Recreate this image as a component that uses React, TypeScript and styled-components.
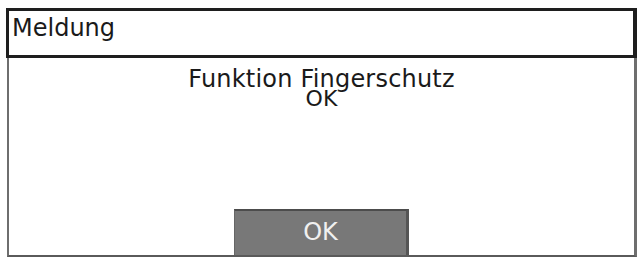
import React from "react";
import styled, { createGlobalStyle } from "styled-components";

const Global = createGlobalStyle`
  html, body { margin: 0; padding: 0; background: #ffffff; }
  body { font-family: "DejaVu Sans", "Liberation Sans", sans-serif; }
`;

const Screen = styled.div`
  width: 637px;
  height: 257px;
  box-sizing: border-box;
  padding: 8px 0 0 6px;
  display: flex;
  flex-direction: column;
  background: #ffffff;
  overflow: hidden;
`;

const TitleBar = styled.div`
  height: 50px;
  box-sizing: border-box;
  border: 3px solid #1e1e1e;
  border-right-width: 4px;
  padding: 3px 0 0 3px;
  display: flex;
  align-items: flex-start;
`;

const Title = styled.span`
  font-size: 24px;
  line-height: 28px;
  color: #1a1a1a;
`;

const Body = styled.div`
  flex: 1;
  margin-left: 1px;
  box-sizing: border-box;
  border-left: 2px solid #6e6e6e;
  border-right: 3px solid #6e6e6e;
  border-bottom: 2px solid #5a5a5a;
  padding-top: 11px;
  display: flex;
  flex-direction: column;
  align-items: center;
`;

const Message = styled.div`
  display: flex;
  flex-direction: column;
  align-items: center;
  color: #1a1a1a;
`;

const Line = styled.div<{ $size: number }>`
  font-size: ${(p) => p.$size}px;
  line-height: 20px;
  height: 20px;
  letter-spacing: 0.2px;
  white-space: nowrap;
  overflow: visible;
`;

const Spacer = styled.div`
  flex: 1;
`;

const Button = styled.button`
  width: 175px;
  height: 46px;
  box-sizing: border-box;
  margin: 0;
  padding: 0 0 2px 0;
  background: #787878;
  border: none;
  border-top: 2px solid #4c4c4c;
  border-right: 3px solid #555555;
  border-left: 1px solid #666666;
  color: #f0f0f0;
  font-family: "DejaVu Sans", "Liberation Sans", sans-serif;
  font-size: 24px;
  line-height: 1;
  display: flex;
  align-items: center;
  justify-content: center;
`;

export default function App() {
  return (
    <>
      <Global />
      <Screen>
        <TitleBar>
          <Title>Meldung</Title>
        </TitleBar>
        <Body>
          <Message>
            <Line $size={24}>Funktion Fingerschutz</Line>
            <Line $size={22}>OK</Line>
          </Message>
          <Spacer />
          <Button>OK</Button>
        </Body>
      </Screen>
    </>
  );
}
